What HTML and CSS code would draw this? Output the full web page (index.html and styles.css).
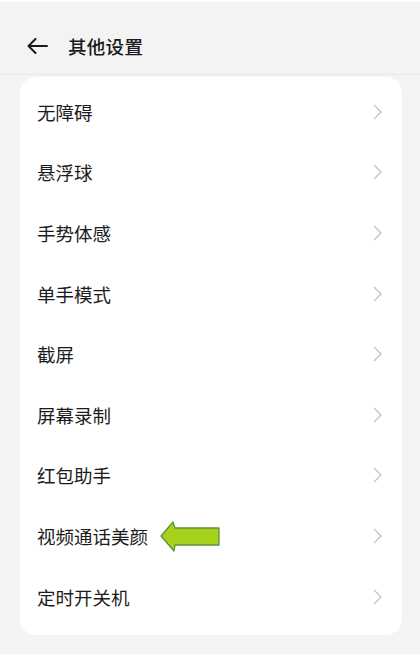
FILE: index.html
```html
<!DOCTYPE html>
<html lang="zh-CN">
<head>
<meta charset="utf-8">
<link rel="stylesheet" href="styles.css">
</head>
<body>
<div class="page">
  <header class="topbar">
    <svg class="back" width="22" height="16" viewBox="0 0 22 16"><path d="M21 8H2.5M9.5 1L2.5 8l7 7" fill="none" stroke="#1a1a1a" stroke-width="2" stroke-linecap="round" stroke-linejoin="round"/></svg>
    <h1 class="title">其他设置</h1>
  </header>
  <main class="card">
    <div class="row"><span class="label">无障碍</span><svg class="chev" width="9" height="16" viewBox="0 0 9 16"><path d="M1 1l7 7-7 7" fill="none" stroke="#c4c4c4" stroke-width="1.4"/></svg></div>
    <div class="row"><span class="label">悬浮球</span><svg class="chev" width="9" height="16" viewBox="0 0 9 16"><path d="M1 1l7 7-7 7" fill="none" stroke="#c4c4c4" stroke-width="1.4"/></svg></div>
    <div class="row"><span class="label">手势体感</span><svg class="chev" width="9" height="16" viewBox="0 0 9 16"><path d="M1 1l7 7-7 7" fill="none" stroke="#c4c4c4" stroke-width="1.4"/></svg></div>
    <div class="row"><span class="label">单手模式</span><svg class="chev" width="9" height="16" viewBox="0 0 9 16"><path d="M1 1l7 7-7 7" fill="none" stroke="#c4c4c4" stroke-width="1.4"/></svg></div>
    <div class="row"><span class="label">截屏</span><svg class="chev" width="9" height="16" viewBox="0 0 9 16"><path d="M1 1l7 7-7 7" fill="none" stroke="#c4c4c4" stroke-width="1.4"/></svg></div>
    <div class="row"><span class="label">屏幕录制</span><svg class="chev" width="9" height="16" viewBox="0 0 9 16"><path d="M1 1l7 7-7 7" fill="none" stroke="#c4c4c4" stroke-width="1.4"/></svg></div>
    <div class="row"><span class="label">红包助手</span><svg class="chev" width="9" height="16" viewBox="0 0 9 16"><path d="M1 1l7 7-7 7" fill="none" stroke="#c4c4c4" stroke-width="1.4"/></svg></div>
    <div class="row"><span class="label">视频通话美颜<svg class="pointer" width="62" height="33" viewBox="0 0 62 33"><polygon points="2,16 14,2 16,8 60,8 60,25 16,25 15,31" fill="#a6d21c" stroke="#5f8f3c" stroke-width="1.3" stroke-linejoin="round"/></svg></span><svg class="chev" width="9" height="16" viewBox="0 0 9 16"><path d="M1 1l7 7-7 7" fill="none" stroke="#c4c4c4" stroke-width="1.4"/></svg></div>
    <div class="row"><span class="label">定时开关机</span><svg class="chev" width="9" height="16" viewBox="0 0 9 16"><path d="M1 1l7 7-7 7" fill="none" stroke="#c4c4c4" stroke-width="1.4"/></svg></div>
  </main>
</div>
</body>
</html>
```
FILE: styles.css
```css
* { box-sizing: border-box; }
html, body { margin: 0; padding: 0; }
body {
  background: #f4f4f4;
  font-family: "Noto Sans CJK SC", "Noto Sans", sans-serif;
  color: #1f1f1f;
  width: 420px;
  height: 654px;
  overflow: hidden;
}
.page { display: flex; flex-direction: column; }
.topbar {
  height: 75px;
  padding: 16px 0 0 26px;
  display: flex;
  align-items: center;
  border-top: 2px solid #fbfbfb;
  border-bottom: 1px solid #e8e8e8;
  background: #f3f3f3;
}
.back { flex: none; }
.title {
  margin: 0 0 0 20px;
  font-size: 18.5px;
  font-weight: 500;
  color: #1a1a1a;
  letter-spacing: 0.3px;
}
.card {
  margin: 2px 18px 0 20px;
  background: #ffffff;
  border-radius: 16px;
  padding: 4.5px 0 8px;
}
.row {
  height: 60.6px;
  padding: 0 20px 0 17px;
  display: flex;
  align-items: center;
  justify-content: space-between;
}
.label {
  display: flex;
  align-items: center;
  font-size: 18.5px;
  color: #1c1c1c;
}
.pointer { margin-left: 11px; margin-top: 2px; }
.chev { flex: none; }
```
